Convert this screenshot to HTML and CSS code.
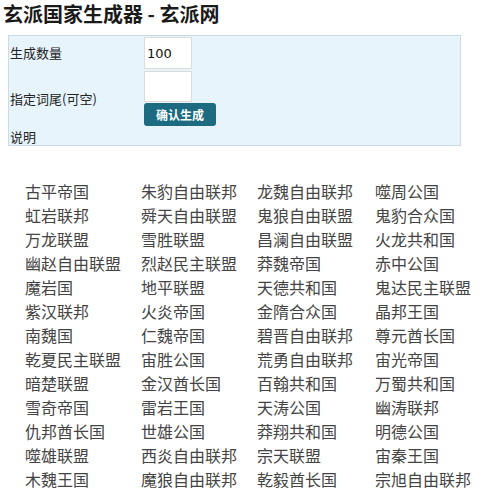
FILE: index.html
```html
<!DOCTYPE html>
<html lang="zh">
<head>
<meta charset="utf-8">
<title>玄派国家生成器 - 玄派网</title>
<link rel="stylesheet" href="styles.css">
</head>
<body>
<h1 class="title">玄派国家生成器 - 玄派网</h1>
<form class="gen-form">
  <div class="row">
    <label class="lbl">生成数量</label>
    <div class="ctl"><input class="inp" type="text" value="100"></div>
  </div>
  <div class="row">
    <label class="lbl">指定词尾(可空)</label>
    <div class="ctl">
      <input class="inp inp2" type="text" value="">
      <button class="btn" type="button">确认生成</button>
    </div>
  </div>
  <div class="row row-note">
    <span class="lbl">说明</span>
  </div>
</form>
<ul class="names">
  <li>古平帝国</li><li>朱豹自由联邦</li><li>龙魏自由联邦</li><li>噬周公国</li>
  <li>虹岩联邦</li><li>舜天自由联盟</li><li>鬼狼自由联盟</li><li>鬼豹合众国</li>
  <li>万龙联盟</li><li>雪胜联盟</li><li>昌澜自由联盟</li><li>火龙共和国</li>
  <li>幽赵自由联盟</li><li>烈赵民主联盟</li><li>莽魏帝国</li><li>赤中公国</li>
  <li>魔岩国</li><li>地平联盟</li><li>天德共和国</li><li>鬼达民主联盟</li>
  <li>紫汉联邦</li><li>火炎帝国</li><li>金隋合众国</li><li>晶邦王国</li>
  <li>南魏国</li><li>仁魏帝国</li><li>碧晋自由联邦</li><li>尊元酋长国</li>
  <li>乾夏民主联盟</li><li>宙胜公国</li><li>荒勇自由联邦</li><li>宙光帝国</li>
  <li>暗楚联盟</li><li>金汉酋长国</li><li>百翰共和国</li><li>万蜀共和国</li>
  <li>雪奇帝国</li><li>雷岩王国</li><li>天涛公国</li><li>幽涛联邦</li>
  <li>仇邦酋长国</li><li>世雄公国</li><li>莽翔共和国</li><li>明德公国</li>
  <li>噬雄联盟</li><li>西炎自由联邦</li><li>宗天联盟</li><li>宙秦王国</li>
  <li>木魏王国</li><li>魔狼自由联邦</li><li>乾毅酋长国</li><li>宗旭自由联邦</li>
</ul>
</body>
</html>
```
FILE: styles.css
```css
html, body {
  margin: 0;
  padding: 0;
  background: #ffffff;
}
body {
  font-family: "DejaVu Sans", "Noto Sans CJK SC", sans-serif;
  color: #222;
}
.title {
  margin: 0;
  padding: 0 0 0 3px;
  font-family: "Noto Sans CJK SC", sans-serif;
  font-size: 20px;
  line-height: 28px;
  font-weight: bold;
  color: #1a1a1a;
  height: 35px;
}
.gen-form {
  margin: 0 0 0 8px;
  width: 451px;
  height: 108px;
  border: 1px solid #c9dbe4;
  background: #e8f4fc;
  display: flex;
  flex-direction: column;
  gap: 2px;
  padding-top: 1px;
}
.row {
  display: grid;
  grid-template-columns: 135px auto;
  align-items: center;
}
.lbl {
  padding-left: 1px;
  font-family: "Noto Sans CJK SC", sans-serif;
  font-size: 13px;
  line-height: 16px;
  color: #222;
}
.ctl {
  display: flex;
  flex-direction: column;
  align-items: flex-start;
}
.inp {
  box-sizing: border-box;
  width: 48px;
  height: 32px;
  margin: 0;
  padding: 0 2px;
  border: 1px solid #dcdcdc;
  background: #fff;
  font-family: "DejaVu Sans", sans-serif;
  font-size: 13px;
  color: #111;
  outline: none;
}
.inp2 {
  height: 31px;
}
.btn {
  margin: 1px 0 0 0;
  width: 72px;
  height: 23px;
  padding: 0;
  border: none;
  border-radius: 3px;
  background: #1d6b81;
  color: #fff;
  font-family: "Noto Sans CJK SC", sans-serif;
  font-size: 12px;
  font-weight: bold;
  line-height: 23px;
}
.row-note {
  height: 16px;
  margin-top: 1px;
}
.names {
  list-style: none;
  margin: 33px 0 0 25px;
  padding: 0;
  display: grid;
  grid-template-columns: 116px 116px 118px 1fr;
  font-family: "Noto Sans CJK SC", sans-serif;
  font-size: 16px;
  line-height: 24px;
  color: #444;
}
.names li {
  white-space: nowrap;
}
```
